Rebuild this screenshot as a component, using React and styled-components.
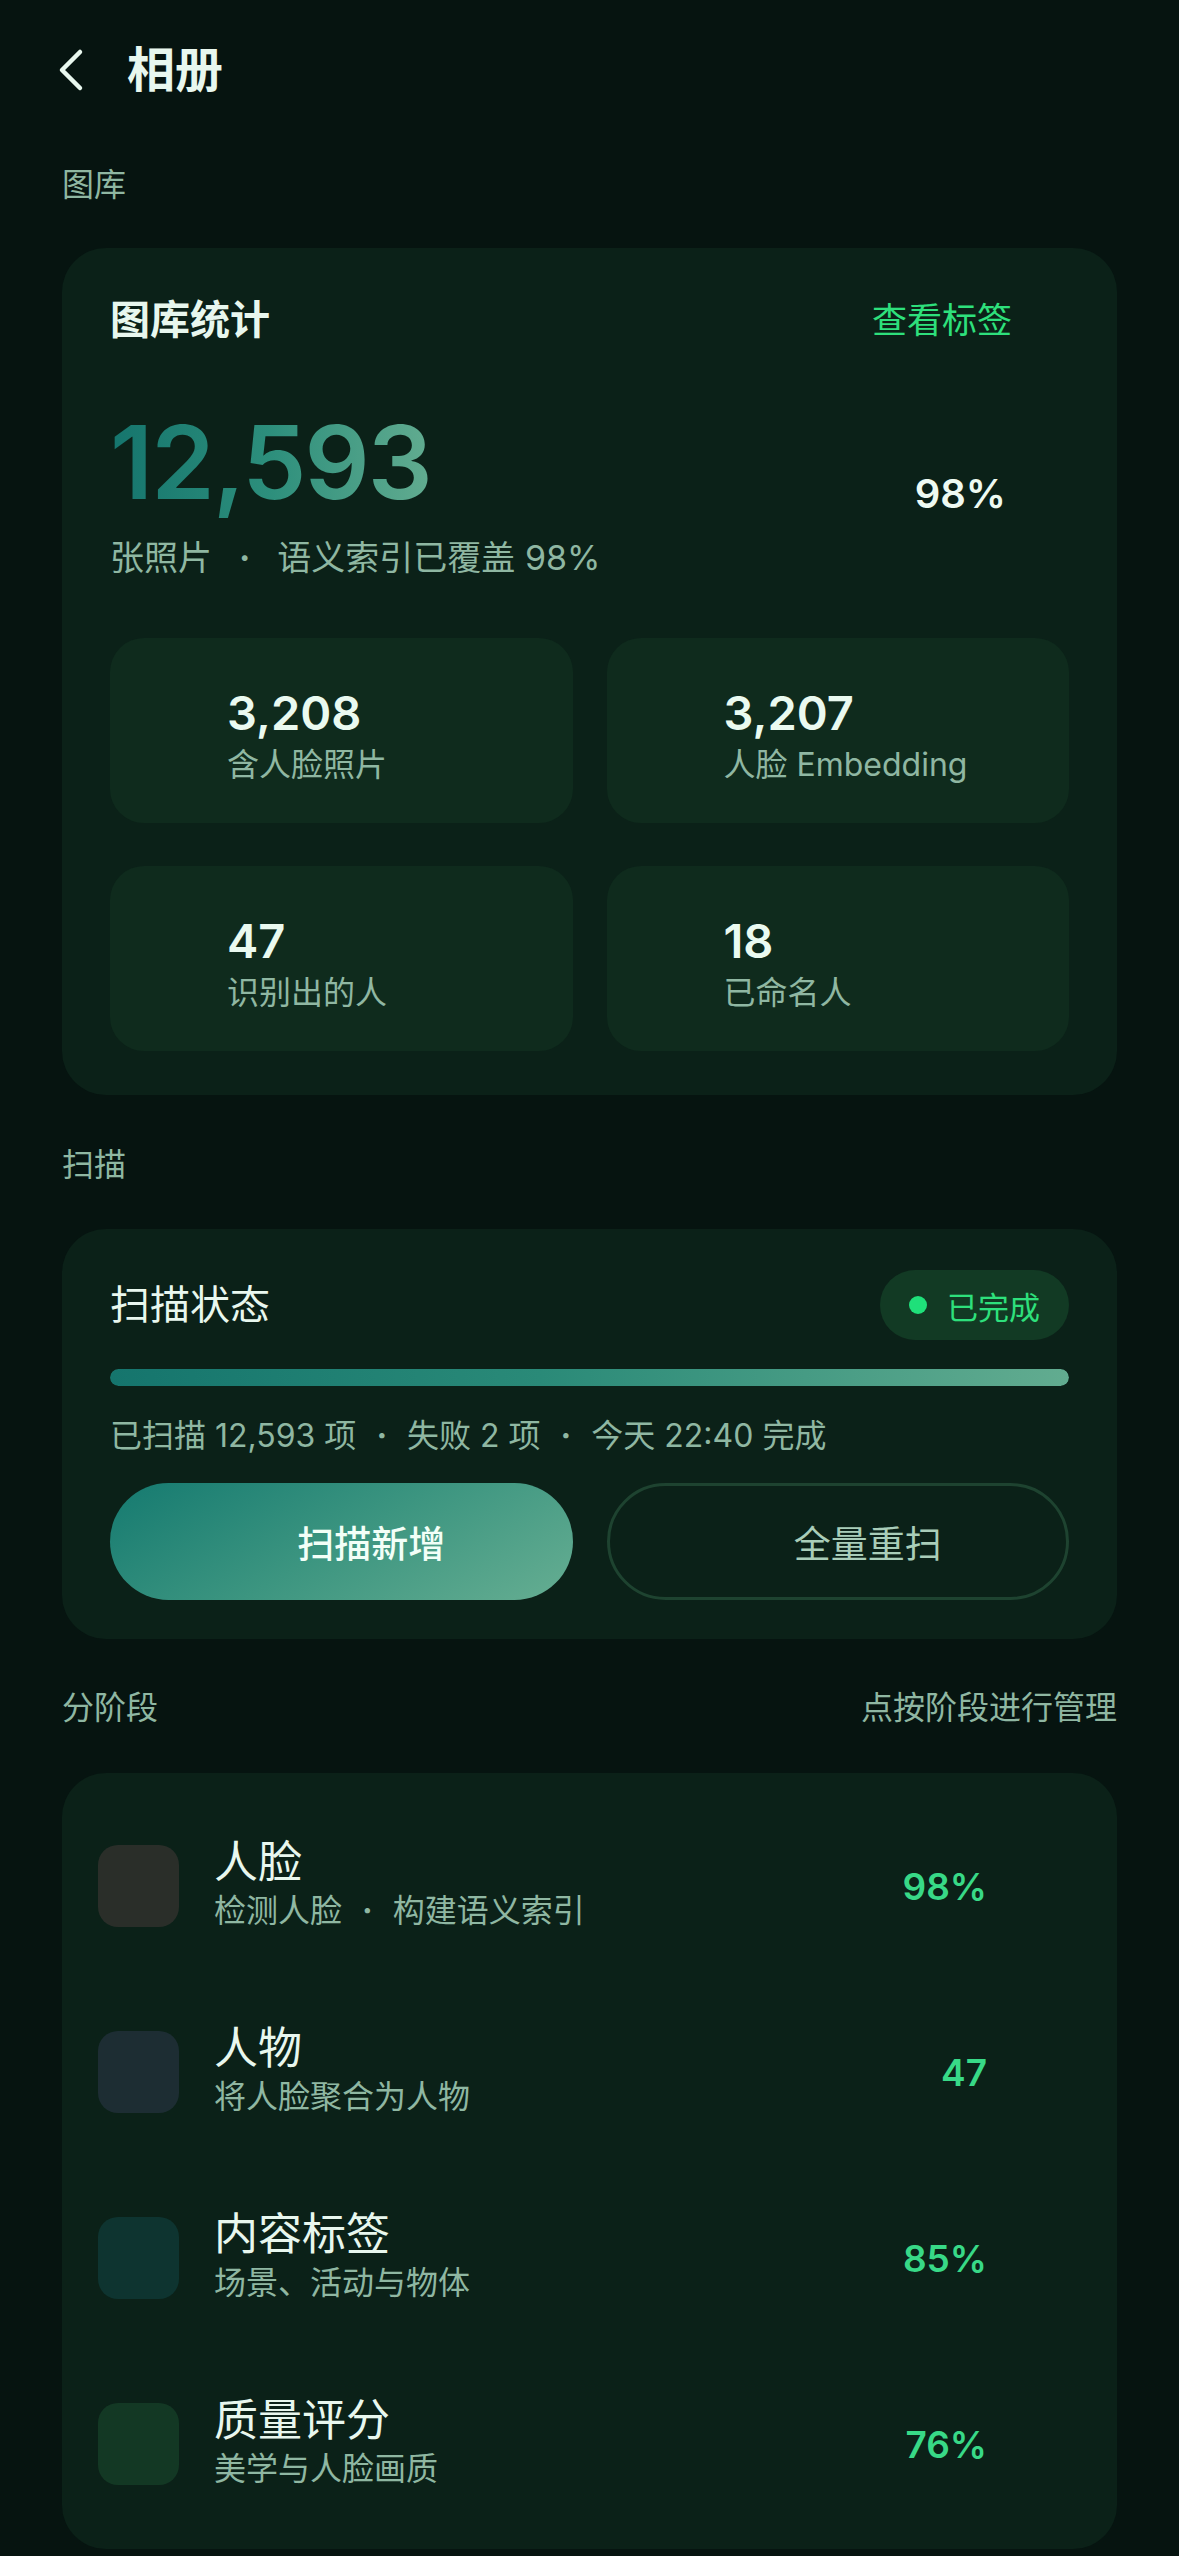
import styled, { createGlobalStyle } from 'styled-components'

/** global */
const GlobalStyle = createGlobalStyle`
  * { box-sizing: border-box; }
  body {
    margin: 0;
    background: #061410;
    font-family: Inter, "Noto Sans CJK SC", sans-serif;
    color: #e8f7ee;
    overflow: hidden;
  }
`

/** styled */
const Page = styled.div`
  width: 1179px;
  min-height: 2556px;
  padding: 0 62px;
`

const Header = styled.header`
  height: 140px;
  display: flex;
  align-items: center;
  gap: 43px;
`

const BackButton = styled.button`
  width: 28px;
  height: 44px;
  margin-left: -6px;
  padding: 0;
  border: 0;
  background: none;
  display: flex;
  align-items: center;
`

const Title = styled.h1`
  margin: 0;
  font-size: 48px;
  font-weight: 600;
  line-height: 56px;
  color: #e8f7ee;
`

const SectionHead = styled.div`
  display: flex;
  justify-content: space-between;
  align-items: center;
  padding: ${(p) => p.$pad || '48px 0 42px'};
  font-size: 32px;
  line-height: 44px;
  color: #8fb7a2;
`

const Card = styled.section`
  background: #0b2118;
  border-radius: 44px;
  padding: ${(p) => p.$pad || '48px'};
`

const CardHeader = styled.div`
  display: flex;
  justify-content: space-between;
  align-items: center;
  height: ${(p) => p.$h || 48}px;
`

const CardTitle = styled.h2`
  margin: 0;
  font-size: 40px;
  font-weight: ${(p) => p.$weight || 600};
  line-height: 48px;
  color: #e8f7ee;
`

const LinkText = styled.span`
  font-size: 35px;
  line-height: 48px;
  color: #2ee07c;
  margin-right: 57px;
`

const Summary = styled.div`
  display: flex;
  justify-content: space-between;
  align-items: center;
  margin-top: 62px;
`

const BigNumber = styled.div`
  font-size: 102px;
  font-weight: 600;
  line-height: 112px;
  letter-spacing: -2px;
  background: linear-gradient(90deg, #15756d 0%, #2d8f7c 50%, #62ac90 100%);
  -webkit-background-clip: text;
  background-clip: text;
  color: transparent;
  width: fit-content;
`

const Muted = styled.div`
  font-size: ${(p) => p.$size || 32}px;
  line-height: 44px;
  color: #8fb7a2;
  margin-top: ${(p) => p.$mt || 0}px;
  white-space: nowrap;
`

const Dot = styled.span`
  margin: 0 ${(p) => p.$gap || 22}px;
  font-weight: 700;
`

const SummaryValue = styled.span`
  font-size: 40px;
  font-weight: 600;
  color: #eefaf2;
  margin-right: 63px;
`

const TileGrid = styled.div`
  display: grid;
  grid-template-columns: 1fr 1fr;
  column-gap: 34px;
  row-gap: 43px;
  margin-top: 58px;
`

const Tile = styled.div`
  height: 185px;
  border-radius: 34px;
  background: #0f2b1d;
  padding: 47px 0 0 117px;
`

const TileNumber = styled.div`
  font-size: 47px;
  font-weight: 600;
  line-height: 56px;
  color: #eafaf0;
`

const TileLabel = styled.div`
  font-size: 32px;
  line-height: 44px;
  margin-top: 2px;
  color: #8fb7a2;
`

const Badge = styled.span`
  height: 70px;
  display: flex;
  align-items: center;
  gap: 20px;
  padding: 0 29px;
  border-radius: 35px;
  background: #123a24;
  color: #2ee07c;
  font-size: 31px;
`

const BadgeDot = styled.span`
  width: 18px;
  height: 18px;
  border-radius: 50%;
  background: #1fe07a;
`

const Progress = styled.div`
  height: 17px;
  margin-top: 29px;
  border-radius: 9px;
  background: #16352a;
  overflow: hidden;
`

const ProgressFill = styled.div`
  height: 100%;
  border-radius: 9px;
  background: linear-gradient(90deg, #15756d 0%, #2a8a78 45%, #62ac90 100%);
`

const ButtonRow = styled.div`
  display: grid;
  grid-template-columns: 1fr 1fr;
  column-gap: 34px;
  margin-top: 25px;
`

const Button = styled.button`
  height: 117px;
  border-radius: 59px;
  padding: 0 0 0 60px;
  font-family: inherit;
  font-size: 37px;
  font-weight: ${(p) => (p.$primary ? 500 : 400)};
  color: ${(p) => (p.$primary ? '#f2fff7' : '#a9cdb9')};
  background: ${(p) =>
    p.$primary ? 'linear-gradient(150deg, #157a70 0%, #3c9580 50%, #66ae92 100%)' : 'transparent'};
  border: ${(p) => (p.$primary ? '0' : '3px solid #1e4330')};
`

const StageRow = styled.div`
  height: 186px;
  display: flex;
  align-items: center;
  padding: 0 130px 0 36px;
`

const StageIcon = styled.div`
  width: 81px;
  height: 82px;
  border-radius: 20px;
  background: ${(p) => p.$color};
  flex-shrink: 0;
`

const StageText = styled.div`
  flex: 1;
  margin-left: 35px;
  margin-top: -4px;
`

const StageTitle = styled.div`
  font-size: 44px;
  font-weight: 400;
  line-height: 54px;
  color: #e8f7ee;
`

const StageValue = styled.span`
  font-size: 37px;
  font-weight: 600;
  color: #38d987;
`

const stats = [
  { value: '3,208', label: '含人脸照片' },
  { value: '3,207', label: '人脸 Embedding' },
  { value: '47', label: '识别出的人' },
  { value: '18', label: '已命名人' },
]

const stages = [
  { title: '人脸', desc: ['检测人脸', '构建语义索引'], value: '98%', color: '#2a2e29' },
  { title: '人物', desc: ['将人脸聚合为人物'], value: '47', color: '#1d2d33' },
  { title: '内容标签', desc: ['场景、活动与物体'], value: '85%', color: '#0e3430' },
  { title: '质量评分', desc: ['美学与人脸画质'], value: '76%', color: '#133824' },
]

const Chevron = () => (
  <svg width="28" height="44" viewBox="0 0 28 44" fill="none">
    <path d="M24 4 L6 22 L24 40" stroke="#e8f7ee" strokeWidth="4.5" strokeLinecap="round" strokeLinejoin="round" />
  </svg>
)

export default function App() {
  return (
    <Page>
      <GlobalStyle />
      <Header>
        <BackButton aria-label="返回">
          <Chevron />
        </BackButton>
        <Title>相册</Title>
      </Header>

      <SectionHead $pad="23px 0 41px">图库</SectionHead>
      <Card $pad="48px 48px 44px">
        <CardHeader>
          <CardTitle>图库统计</CardTitle>
          <LinkText>查看标签</LinkText>
        </CardHeader>
        <Summary>
          <div>
            <BigNumber>12,593</BigNumber>
            <Muted $size={34} $mt={18}>
              张照片<Dot $gap={27}>·</Dot>语义索引已覆盖 98%
            </Muted>
          </div>
          <SummaryValue>98%</SummaryValue>
        </Summary>
        <TileGrid>
          {stats.map((s) => (
            <Tile key={s.label}>
              <TileNumber>{s.value}</TileNumber>
              <TileLabel>{s.label}</TileLabel>
            </Tile>
          ))}
        </TileGrid>
      </Card>

      <SectionHead>扫描</SectionHead>
      <Card $pad="41px 48px 39px">
        <CardHeader $h={70}>
          <CardTitle $weight={400}>扫描状态</CardTitle>
          <Badge>
            <BadgeDot />
            已完成
          </Badge>
        </CardHeader>
        <Progress>
          <ProgressFill style={{ width: '100%' }} />
        </Progress>
        <Muted $mt={28}>
          已扫描 12,593 项<Dot $gap={20}>·</Dot>失败 2 项<Dot $gap={20}>·</Dot>今天 22:40 完成
        </Muted>
        <ButtonRow>
          <Button $primary>扫描新增</Button>
          <Button>全量重扫</Button>
        </ButtonRow>
      </Card>

      <SectionHead $pad="47px 0 43px">
        <span>分阶段</span>
        <span>点按阶段进行管理</span>
      </SectionHead>
      <Card $pad="20px 0 12px">
        {stages.map((st) => (
          <StageRow key={st.title}>
            <StageIcon $color={st.color} />
            <StageText>
              <StageTitle>{st.title}</StageTitle>
              <Muted>
                {st.desc.map((d, i) => (
                  <span key={d}>
                    {i > 0 && <Dot $gap={20}>·</Dot>}
                    {d}
                  </span>
                ))}
              </Muted>
            </StageText>
            <StageValue>{st.value}</StageValue>
          </StageRow>
        ))}
      </Card>
    </Page>
  )
}
